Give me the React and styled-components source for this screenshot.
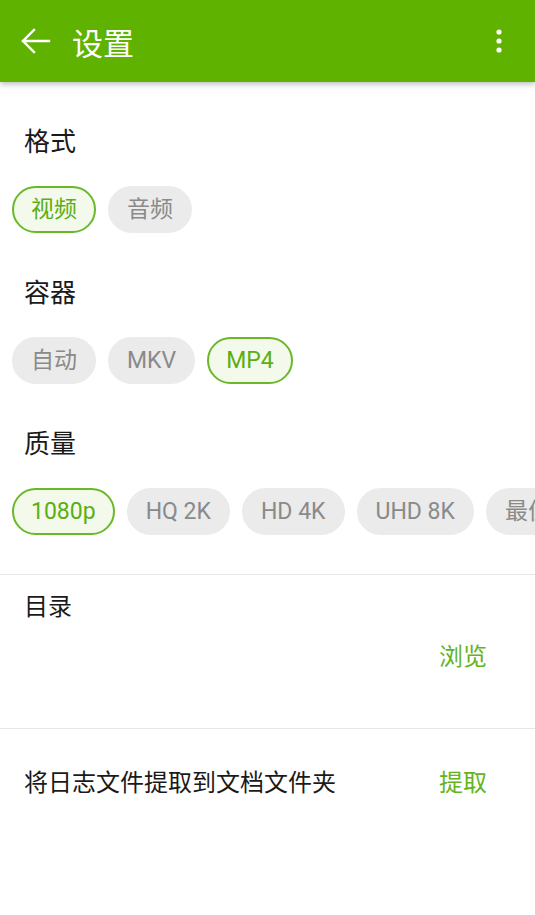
import React from 'react';
import styled, { createGlobalStyle } from 'styled-components';

const GlobalStyle = createGlobalStyle`
  html, body {
    margin: 0;
    padding: 0;
    background: #ffffff;
  }
  body {
    font-family: Roboto, "Noto Sans CJK SC", sans-serif;
  }
`;

const Page = styled.div`
  width: 535px;
  min-height: 915px;
  background: #ffffff;
  overflow: hidden;
`;

const AppBar = styled.header`
  height: 82px;
  background: #5fb300;
  display: flex;
  align-items: center;
  padding: 0 32px 0 20px;
  box-shadow: 0 2px 6px rgba(0, 0, 0, 0.28);
  position: relative;
  z-index: 1;
`;

const IconButton = styled.button`
  background: none;
  border: none;
  padding: 0;
  display: flex;
  align-items: center;
  justify-content: center;
  color: #ffffff;
  cursor: pointer;
`;

const Title = styled.h1`
  flex: 1;
  margin: 0 0 0 20px;
  font-family: "Noto Sans CJK SC", sans-serif;
  font-weight: 400;
  font-size: 31px;
  color: #ffffff;
  line-height: 1;
`;

const Section = styled.section`
  padding-top: 33px;
`;

const SectionTitle = styled.h2`
  margin: 0;
  height: 48px;
  display: flex;
  align-items: center;
  padding-left: 24px;
  font-family: "Noto Sans CJK SC", sans-serif;
  font-weight: 400;
  font-size: 26px;
  color: #1a1a1a;
`;

const ChipRow = styled.div`
  display: flex;
  gap: 12px;
  padding-left: 12px;
  margin-top: 23px;
  white-space: nowrap;
  overflow: hidden;
`;

const Chip = styled.button`
  flex: none;
  height: 47px;
  box-sizing: border-box;
  padding: 0 17px;
  border-radius: 24px;
  border: 2px solid ${p => (p.$active ? '#6ab82a' : '#ebebeb')};
  background: ${p => (p.$active ? '#f3faec' : '#ebebeb')};
  color: ${p => (p.$active ? '#5cae12' : '#8a8a8a')};
  font-family: Roboto, "Noto Sans CJK SC", sans-serif;
  font-size: 23px;
  line-height: 1;
`;

const Spacer = styled.div`
  height: ${p => p.$h}px;
`;

const Divider = styled.hr`
  margin: 0;
  border: none;
  border-top: 1px solid #e6e6e6;
`;

const DirBlock = styled.div`
  padding: 16px 48px 61px 24px;
`;

const DirLabel = styled.div`
  font-family: "Noto Sans CJK SC", sans-serif;
  font-size: 24px;
  color: #1a1a1a;
  line-height: 28px;
`;

const ActionRow = styled.div`
  display: flex;
  align-items: center;
  justify-content: ${p => (p.$spread ? 'space-between' : 'flex-end')};
  margin-top: ${p => p.$top || 0}px;
`;

const Action = styled.button`
  background: none;
  border: none;
  padding: 0;
  font-family: "Noto Sans CJK SC", sans-serif;
  font-size: 24px;
  color: #63b41e;
  line-height: 1;
`;

const LogRow = styled.div`
  padding: 34px 48px 0 24px;
`;

const LogText = styled.span`
  font-family: "Noto Sans CJK SC", sans-serif;
  font-size: 24px;
  color: #1a1a1a;
`;

const sections = [
  { title: '格式', chips: ['视频', '音频'], active: 0 },
  { title: '容器', chips: ['自动', 'MKV', 'MP4'], active: 2 },
  { title: '质量', chips: ['1080p', 'HQ 2K', 'HD 4K', 'UHD 8K', '最佳'], active: 0 },
];

export default function App() {
  return (
    <Page>
      <GlobalStyle />
      <AppBar>
        <IconButton aria-label="返回">
          <svg width="32" height="32" viewBox="0 0 32 32" fill="none" stroke="#fff" strokeWidth="2.4" strokeLinecap="square">
            <path d="M3 16h26M14 5L3 16l11 11" />
          </svg>
        </IconButton>
        <Title>设置</Title>
        <IconButton aria-label="更多">
          <svg width="8" height="26" viewBox="0 0 8 26" fill="#fff">
            <circle cx="4" cy="4" r="2.6" />
            <circle cx="4" cy="13" r="2.6" />
            <circle cx="4" cy="22" r="2.6" />
          </svg>
        </IconButton>
      </AppBar>

      {sections.map(s => (
        <Section key={s.title}>
          <SectionTitle>{s.title}</SectionTitle>
          <ChipRow>
            {s.chips.map((c, i) => (
              <Chip key={c} $active={i === s.active}>{c}</Chip>
            ))}
          </ChipRow>
        </Section>
      ))}

      <Spacer $h={39} />
      <Divider />
      <DirBlock>
        <DirLabel>目录</DirLabel>
        <ActionRow $top={24}>
          <Action>浏览</Action>
        </ActionRow>
      </DirBlock>
      <Divider />
      <LogRow>
        <ActionRow $spread>
          <LogText>将日志文件提取到文档文件夹</LogText>
          <Action>提取</Action>
        </ActionRow>
      </LogRow>
    </Page>
  );
}
